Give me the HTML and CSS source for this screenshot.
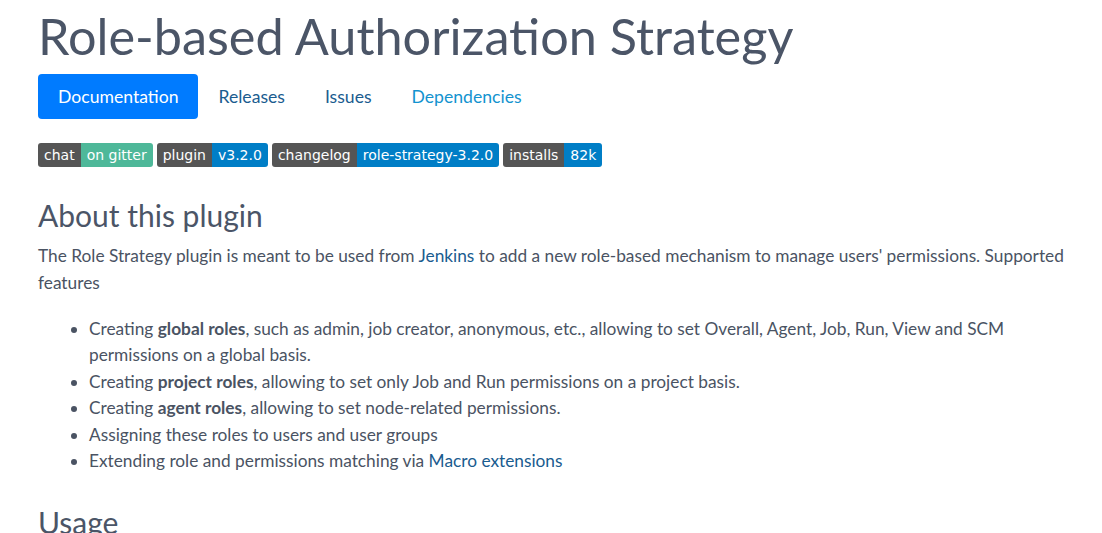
FILE: index.html
```html
<!DOCTYPE html>
<html>
<head>
<meta charset="utf-8">
<link rel="stylesheet" href="styles.css">
</head>
<body>
<div class="page">
  <h1 class="title">Role-based Authorization Strategy</h1>
  <nav class="tabs">
    <a class="tab active">Documentation</a>
    <a class="tab">Releases</a>
    <a class="tab">Issues</a>
    <a class="tab light">Dependencies</a>
  </nav>
  <div class="badges">
    <span class="badge"><span class="bl">chat</span><span class="br green">on gitter</span></span>
    <span class="badge"><span class="bl">plugin</span><span class="br">v3.2.0</span></span>
    <span class="badge"><span class="bl">changelog</span><span class="br">role-strategy-3.2.0</span></span>
    <span class="badge"><span class="bl">installs</span><span class="br">82k</span></span>
  </div>
  <h2 class="h2">About this plugin</h2>
  <p class="text">The Role Strategy plugin is meant to be used from <a class="link">Jenkins</a> to add a new role-based mechanism to manage users' permissions. Supported features</p>
  <ul class="list">
    <li>Creating <b>global roles</b>, such as admin, job creator, anonymous, etc., allowing to set Overall, Agent, Job, Run, View and SCM permissions on a global basis.</li>
    <li>Creating <b>project roles</b>, allowing to set only Job and Run permissions on a project basis.</li>
    <li>Creating <b>agent roles</b>, allowing to set node-related permissions.</li>
    <li>Assigning these roles to users and user groups</li>
    <li>Extending role and permissions matching via <a class="link">Macro extensions</a></li>
  </ul>
  <h2 class="h2 usage">Usage</h2>
</div>
</body>
</html>
```
FILE: styles.css
```css
html, body { margin: 0; padding: 0; background: #fff; }
body { font-family: Lato, "Open Sans", sans-serif; color: #4a5363; }
.page { padding: 0 38px; }
.title { font-size: 50.4px; font-weight: 400; margin: 0; padding-top: 4px; line-height: 64px; color: #4b5567; }
.tabs { display: flex; margin-top: 6px; }
.tab { display: block; height: 45px; line-height: 45px; padding: 0 20px; font-size: 17.6px; color: #1a5c8f; border-radius: 4px; }
.tab.active { background: #007bff; color: #fff; }
.tab.light { color: #1393cf; }
.badges { display: flex; gap: 4px; margin-top: 24px; }
.badge { display: flex; height: 24px; line-height: 24px; border-radius: 3px; overflow: hidden; font-family: "DejaVu Sans", Verdana, sans-serif; font-size: 14px; color: #fff; }
.bl { background: #555; padding: 0 6px; }
.br { background: #007ec6; padding: 0 6px; }
.br.green { background: #4eb899; }
.h2 { font-size: 30px; font-weight: 400; margin: 28px 0 0; line-height: 40px; color: #4b5567; }
.text { font-size: 17.3px; line-height: 27px; margin: 7px 0 0; }
.link { color: #1a5c8f; text-decoration: none; }
.list { font-size: 17.3px; line-height: 26.4px; margin: 20px 0 0; padding-left: 51px; }
.usage { margin-top: 28px; }
```
